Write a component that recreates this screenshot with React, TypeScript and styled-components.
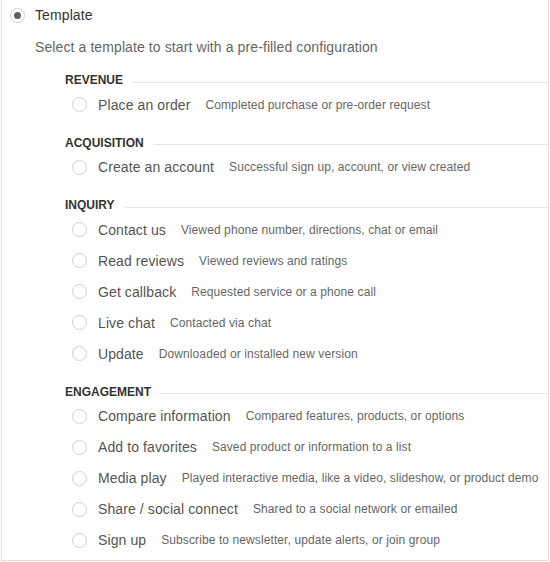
import React from "react";
import styled, { createGlobalStyle } from "styled-components";

const Global = createGlobalStyle`
  html, body { margin: 0; padding: 0; background: #fff; }
  body { font-family: "Liberation Sans", Arial, sans-serif; }
`;

const Frame = styled.div`
  box-sizing: border-box;
  width: 548px;
  height: 561px;
  margin-left: 1px;
  border: 1px solid #dedede;
  border-top: none;
  overflow: hidden;
`;

const TopRow = styled.label`
  display: flex;
  align-items: center;
  height: 30px;
  padding-left: 8px;
  gap: 10px;
  font-size: 14px;
  letter-spacing: 0.1px;
  color: #333;
`;

const Radio = styled.span<{ $checked?: boolean }>`
  box-sizing: border-box;
  flex: none;
  width: 15px;
  height: 15px;
  border-radius: 50%;
  border: 1px solid #cfcfcf;
  background: #fff;
  display: flex;
  align-items: center;
  justify-content: center;
  &::after {
    content: "";
    display: ${(p) => (p.$checked ? "block" : "none")};
    width: 7px;
    height: 7px;
    border-radius: 50%;
    background: #616161;
  }
`;

const Subtitle = styled.div`
  height: 34px;
  line-height: 34px;
  padding-left: 33px;
  font-size: 14px;
  letter-spacing: 0.1px;
  color: #666;
`;

const Sections = styled.div`
  padding-top: 7px;
  padding-left: 63px;
`;

const Section = styled.section`
  & + & {
    margin-top: 13.5px;
  }
`;

const Header = styled.div`
  display: flex;
  align-items: center;
  height: 18px;
  gap: 10px;
  font-size: 12px;
  font-weight: bold;
  color: #333;
  &::after {
    content: "";
    flex: 1;
    height: 1px;
    background: #e6e6e6;
    transform: translateY(2px);
  }
`;

const Item = styled.label`
  display: flex;
  align-items: center;
  height: 31px;
  padding-left: 7px;
`;

const Label = styled.span`
  margin-left: 11px;
  font-size: 14px;
  letter-spacing: 0.1px;
  color: #555;
`;

const Desc = styled.span`
  margin-left: 15px;
  font-size: 12px;
  letter-spacing: 0.1px;
  color: #666;
`;

const data: { title: string; items: [string, string][] }[] = [
  { title: "REVENUE", items: [["Place an order", "Completed purchase or pre-order request"]] },
  { title: "ACQUISITION", items: [["Create an account", "Successful sign up, account, or view created"]] },
  {
    title: "INQUIRY",
    items: [
      ["Contact us", "Viewed phone number, directions, chat or email"],
      ["Read reviews", "Viewed reviews and ratings"],
      ["Get callback", "Requested service or a phone call"],
      ["Live chat", "Contacted via chat"],
      ["Update", "Downloaded or installed new version"],
    ],
  },
  {
    title: "ENGAGEMENT",
    items: [
      ["Compare information", "Compared features, products, or options"],
      ["Add to favorites", "Saved product or information to a list"],
      ["Media play", "Played interactive media, like a video, slideshow, or product demo"],
      ["Share / social connect", "Shared to a social network or emailed"],
      ["Sign up", "Subscribe to newsletter, update alerts, or join group"],
    ],
  },
];

export default function App() {
  return (
    <>
      <Global />
      <Frame>
        <TopRow>
          <Radio $checked />
          Template
        </TopRow>
        <Subtitle>Select a template to start with a pre-filled configuration</Subtitle>
        <Sections>
          {data.map((s) => (
            <Section key={s.title}>
              <Header>{s.title}</Header>
              {s.items.map(([l, d]) => (
                <Item key={l}>
                  <Radio />
                  <Label>{l}</Label>
                  <Desc>{d}</Desc>
                </Item>
              ))}
            </Section>
          ))}
        </Sections>
      </Frame>
    </>
  );
}
